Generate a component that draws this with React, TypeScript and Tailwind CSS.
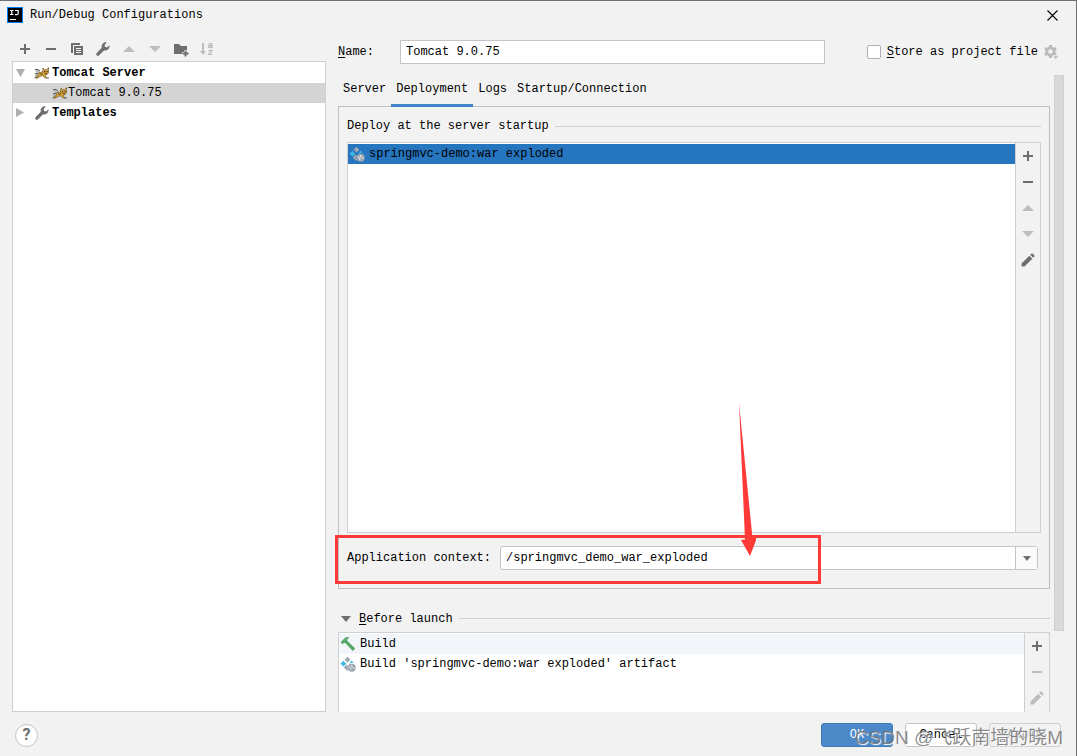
import { useState } from "react";
import type { ReactNode } from "react";

type IconProps = { className?: string };

function Svg({ className = "", children }: { className?: string; children: ReactNode }) {
  return (
    <svg viewBox="0 0 16 16" className={`h-4 w-4 shrink-0 ${className}`} fill="currentColor" aria-hidden="true">
      {children}
    </svg>
  );
}

const PlusIcon = () => (
  <Svg>
    <path d="M7 3h2v4h4v2H9v4H7V9H3V7h4z" />
  </Svg>
);

const MinusIcon = () => (
  <Svg>
    <path d="M3 7h10v2H3z" />
  </Svg>
);

const CopyIcon = () => (
  <Svg>
    <path d="M2 2h9v2H4v8H2z" />
    <path fillRule="evenodd" d="M5 5h9v9H5zM7 7v1h5V7zM7 9v1h5V9zM7 11v1h5v-1z" />
  </Svg>
);

const WrenchIcon = ({ className }: IconProps) => (
  <Svg className={className}>
    <path d="M14.4 4.2 12.1 6.4 10.1 5.9 9.6 3.9 11.8 1.6A4 4 0 0 0 6.8 6.8L1.7 11.9A1.6 1.6 0 0 0 4.1 14.3L9.2 9.2A4 4 0 0 0 14.4 4.2z" />
  </Svg>
);

const UpIcon = () => (
  <Svg>
    <path d="M2 11h12L8 5z" />
  </Svg>
);

const DownIcon = () => (
  <Svg>
    <path d="M2 5h12l-6 6z" />
  </Svg>
);

const FolderPlusIcon = () => (
  <Svg>
    <path d="M1 3h5l2 2h6v4h-3v2H9v2H1z" />
    <path d="M11.500 9.500h2v2h2v2h-2v2h-2v-2h-2v-2h2z" />
  </Svg>
);

const SortIcon = () => (
  <Svg>
    <path d="M3 2h2v8h2l-3 4-3-4h2z" />
    <path d="M9.500 2.600h2.500q1 0 1 1V6.500h-2.400q-1.200 0-1.200-1t1.200-1H13M9.300 9.600h3.700L9.700 13.400h3.600" fill="none" stroke="currentColor" strokeWidth="1.300" />
  </Svg>
);

const PencilIcon = () => (
  <Svg>
    <path d="M1.500 11.500 9.300 3.700l3 3L4.500 14.500h-3zM10.200 2.800l1-1q.8-.8 1.600 0l1.400 1.400q.8.8 0 1.600l-1 1z" />
  </Svg>
);

const GearIcon = () => (
  <Svg>
    <path d="M7.500 1v13M1.900 4.200l11.200 6.600M1.900 10.800l11.200-6.600" stroke="currentColor" strokeWidth="3" />
    <circle cx="7.500" cy="7.500" r="5" />
    <circle cx="7.500" cy="7.500" r="2.300" fill="#f2f2f2" />
    <path d="M9.500 11.800h6.500l-3.200 3.700z" stroke="#f2f2f2" strokeWidth=".8" />
  </Svg>
);

const HammerIcon = () => (
  <Svg className="text-[#59a869]">
    <path d="M.5 6.200 5.300 1.400Q7 .8 9.500 1.200L7 3.800l1 1.700 7.300 6.900-2.500 2.600-7.100-7.400-1.600-.8-1.500 1.500z" />
  </Svg>
);

const ArtifactIcon = () => (
  <Svg>
    <path d="M7.500.8 10.400 3.700 7.500 6.600 4.600 3.700zM6.800 8.600 8 10q-.7 1.300-.2 3.200L7.200 15 3.800 11.600z" fill="#9aa7b0" />
    <path d="M3.400 4.800 6.300 7.700 3.400 10.600.5 7.700zM11.600 4.600l2.300 2.300q-3.200-.3-5.100 1z" fill="#40b6e0" />
    <circle cx="11.700" cy="11.700" r="4" fill="#9aa7b0" />
    <path d="M8.800 10.700l2 1.500v1.800M12 8.900l-.8 1.700 2 .8 1.300 1.600" fill="none" stroke="#e8ecef" strokeWidth="1" />
  </Svg>
);

const TomcatIcon = () => (
  <Svg>
    <path d="M1 4.500q3-.5 5 1.800L3 8.500zM1.200 9.200 5 8.500l-1 2.700-3.200 1.600z" fill="#b9b9b4" />
    <path d="M1 4.500q3.500-.8 5 1.500M1 8.800l3.500-.6M.6 13.200l4-2.200M12 13h3" fill="none" stroke="#4f4f4f" strokeWidth=".9" />
    <path d="M5 7.500 8.500 7 9 3l1.600 1.700h2.200L14.500 2.600v5.200l-1.300 1.700-2 .5 1.300 2.700-1.300.4L8.800 10.800l-2.600.5-2.800 1.900-1.600-.2L4.300 10z" fill="#dba53a" stroke="#5c4a22" strokeWidth=".6" />
    <path d="M10 6h1.200v1.200H10zM12.500 6h1.200v1.200h-1.200z" fill="#2b2b2b" />
    <path d="M10.500 8.500h2.500M6.500 8l.8 2M8 7.700l.8 2" stroke="#4a3a18" strokeWidth=".7" />
  </Svg>
);

function AppLogo() {
  return (
    <svg viewBox="0 0 16 16" className="h-4 w-4 shrink-0" aria-hidden="true">
      <rect width="16" height="16" fill="#087cfa" />
      <rect x="1" y="1" width="14" height="14" fill="#000" />
      <path d="M3 3.500h3.500M4.750 3.500v4M3 7.500h3.500M8 3.500h3.200v3q0 1.200-1.500 1.200H8M3 12.500h6" fill="none" stroke="#fff" strokeWidth="1.200" />
    </svg>
  );
}

function ToolButton({ label, disabled, children }: { label: string; disabled?: boolean; children: ReactNode }) {
  return (
    <button
      type="button"
      aria-label={label}
      disabled={disabled}
      className="flex h-[26px] w-[26px] shrink-0 items-center justify-center text-[#6e6e6e] disabled:text-[#bdbdbd]"
    >
      {children}
    </button>
  );
}

function TreeArrow({ open }: { open?: boolean }) {
  return (
    <svg viewBox="0 0 10 10" className="h-[10px] w-[10px] shrink-0" fill="#adadad" aria-hidden="true">
      <path d={open ? "M0 1h9L4.500 9z" : "M0 0l8 4.500L0 9z"} />
    </svg>
  );
}

const tabs = ["Server", "Deployment", "Logs", "Startup/Connection"];

function Sidebar() {
  return (
    <aside className="flex w-[314px] shrink-0 flex-col">
      <div className="flex h-6 shrink-0 items-center">
        <ToolButton label="Add"><PlusIcon /></ToolButton>
        <ToolButton label="Remove"><MinusIcon /></ToolButton>
        <ToolButton label="Copy"><CopyIcon /></ToolButton>
        <ToolButton label="Edit templates"><WrenchIcon /></ToolButton>
        <ToolButton label="Move up" disabled><UpIcon /></ToolButton>
        <ToolButton label="Move down" disabled><DownIcon /></ToolButton>
        <ToolButton label="New folder"><FolderPlusIcon /></ToolButton>
        <ToolButton label="Sort" disabled><SortIcon /></ToolButton>
      </div>

      <ul className="flex-1 border border-[#cfcfcf] bg-white pt-px">
        <li>
          <button type="button" className="flex h-5 w-full items-center pl-[3px] font-bold">
            <TreeArrow open />
            <span className="ml-2 mr-0.5"><TomcatIcon /></span>
            Tomcat Server
          </button>
        </li>
        <li>
          <button type="button" className="flex h-5 w-full items-center bg-[#d4d4d4] pl-[39px]">
            <TomcatIcon />
            Tomcat 9.0.75
          </button>
        </li>
        <li>
          <button type="button" className="flex h-5 w-full items-center pl-[3px] font-bold">
            <TreeArrow />
            <span className="ml-2 mr-0.5 text-[#6e6e6e]"><WrenchIcon /></span>
            Templates
          </button>
        </li>
      </ul>
    </aside>
  );
}

function ContextRow() {
  const [context, setContext] = useState("/springmvc_demo_war_exploded");

  return (
    <div className="relative mt-[13px] flex items-center pr-[3px]">
      <label htmlFor="context" className="w-[153px] shrink-0">Application context:</label>
      <div className="flex h-6 min-w-0 flex-1 rounded-[3px] border border-[#c4c4c4] bg-white">
        <input
          id="context"
          value={context}
          onChange={(e) => setContext(e.target.value)}
          className="min-w-0 flex-1 bg-transparent px-[5px] outline-none"
        />
        <button
          type="button"
          aria-label="Show contexts"
          className="flex w-[22px] items-center justify-center border-l border-[#c4c4c4] bg-[#fafafa]"
        >
          <svg viewBox="0 0 8 5" className="h-[5px] w-2" fill="#6e6e6e" aria-hidden="true"><path d="M0 0h8L4 5z" /></svg>
        </button>
      </div>

      {/* highlight frame and arrow */}
      <div className="pointer-events-none absolute -left-3 -top-[11px] h-[49px] w-[486px] border-[3px] border-[#fd3a37]" />
      <svg
        viewBox="0 0 20 154"
        className="pointer-events-none absolute -top-[143px] left-[389px] h-[154px] w-5"
        fill="#fd3a37"
        aria-hidden="true"
      >
        <path d="M3 0 16.500 135l4.500-.5L14 153 5 137l4-.5z" />
      </svg>
    </div>
  );
}

function DeploymentPanel() {
  return (
    <section className="h-[483px] shrink-0 border border-[#bfbfbf] px-2">
      <div className="flex h-[35px] items-center gap-[6px] pt-[3px]">
        <h2>Deploy at the server startup</h2>
        <hr className="flex-1 border-[#d0d0d0]" />
      </div>

      <div className="flex h-[391px] border border-[#cfcfcf]">
        <div className="flex-1 bg-white pt-px">
          <div className="flex h-5 items-center gap-1 bg-[#2675bf] pl-px">
            <ArtifactIcon />
            springmvc-demo:war exploded
          </div>
        </div>
        <div className="flex w-[25px] flex-col items-center border-l border-[#cfcfcf]">
          <ToolButton label="Add artifact"><PlusIcon /></ToolButton>
          <ToolButton label="Remove artifact"><MinusIcon /></ToolButton>
          <ToolButton label="Move artifact up" disabled><UpIcon /></ToolButton>
          <ToolButton label="Move artifact down" disabled><DownIcon /></ToolButton>
          <ToolButton label="Edit artifact"><PencilIcon /></ToolButton>
        </div>
      </div>

      <ContextRow />
    </section>
  );
}

function BeforeLaunch() {
  return (
    <section className="flex min-h-0 flex-1 flex-col pt-[17px]">
      <div className="mb-px flex h-[25px] shrink-0 items-center gap-[6px]">
        <button type="button" className="flex items-center pl-[3px]">
          <svg viewBox="0 0 10 6" className="mr-2 h-[6px] w-[10px]" fill="#6e6e6e" aria-hidden="true"><path d="M0 0h10L5 6z" /></svg>
          <span><u className="underline-offset-2">B</u>efore launch</span>
        </button>
        <hr className="flex-1 border-[#d0d0d0]" />
      </div>

      <div className="flex min-h-0 flex-1 overflow-hidden border border-b-0 border-[#cfcfcf]">
        <ul className="flex-1 bg-white pt-px">
          <li className="flex h-5 items-center gap-1 bg-[#f2f5fa] pl-px"><HammerIcon />Build</li>
          <li className="flex h-5 items-center gap-1 pl-px"><ArtifactIcon />Build 'springmvc-demo:war exploded' artifact</li>
        </ul>
        <div className="flex w-[25px] flex-col items-center border-l border-[#cfcfcf]">
          <ToolButton label="Add task"><PlusIcon /></ToolButton>
          <ToolButton label="Remove task" disabled><MinusIcon /></ToolButton>
          <ToolButton label="Edit task" disabled><PencilIcon /></ToolButton>
        </div>
      </div>
    </section>
  );
}

export default function App() {
  const [active, setActive] = useState("Deployment");
  const [name, setName] = useState("Tomcat 9.0.75");

  return (
    <div className="relative flex h-screen flex-col overflow-hidden border-r border-t border-[#707070] bg-[#f2f2f2] font-['Liberation_Mono','Noto_Sans_CJK_SC',monospace] text-[12px] leading-4 text-black">
      {/* title bar */}
      <header className="flex h-9 shrink-0 items-start justify-between pl-[7px] pr-[18px] pt-[6px]">
        <div className="flex items-center gap-[7px]">
          <AppLogo />
          <h1>Run/Debug Configurations</h1>
        </div>
        <button type="button" aria-label="Close" className="mt-[3px]">
          <svg viewBox="0 0 11 11" className="h-[11px] w-[11px]" stroke="#000" strokeWidth="1.100" aria-hidden="true">
            <path d="M.5.5l10 10M10.500.5l-10 10" />
          </svg>
        </button>
      </header>

      <main className="flex min-h-0 flex-1 gap-3 px-3">
        <Sidebar />

        <div className="flex min-w-0 flex-1 flex-col pt-[3px]">
          <div className="flex h-6 shrink-0 items-center pr-[5px]">
            <label htmlFor="name" className="w-[62px] shrink-0"><u className="underline-offset-2">N</u>ame:</label>
            <input
              id="name"
              value={name}
              onChange={(e) => setName(e.target.value)}
              className="mr-[42px] h-6 min-w-0 flex-1 border border-[#c4c4c4] bg-white px-[5px] outline-none"
            />
            <label className="flex shrink-0 items-center gap-[6px]">
              <input type="checkbox" className="h-[14px] w-[14px] appearance-none rounded-[2px] border border-[#b0b0b0] bg-white checked:bg-[#4a88c7]" />
              <span><u className="underline-offset-2">S</u>tore as project file</span>
            </label>
            <button type="button" aria-label="Storage options" className="ml-[5px] text-[#b9b9b9]"><GearIcon /></button>
          </div>

          <div className="mt-[11px] flex min-h-0 flex-1 gap-1">
            <div className="flex min-w-0 flex-1 flex-col">
              <nav className="relative -mb-px flex h-8 shrink-0">
                {tabs.map((tab) => (
                  <button
                    key={tab}
                    type="button"
                    onClick={() => setActive(tab)}
                    className={`border-b-[3px] px-[5px] pb-[2px] ${tab === active ? "border-[#4083c9]" : "border-transparent"}`}
                  >
                    {tab}
                  </button>
                ))}
              </nav>
              <DeploymentPanel />
              <BeforeLaunch />
            </div>
            <div className="h-[556px] w-[10px] shrink-0 border border-[#d0d0d0] bg-[#d9d9d9]" />
          </div>
        </div>
      </main>

      {/* footer */}
      <footer className="flex h-11 shrink-0 items-center justify-between px-[15px] pt-0.5">
        <button
          type="button"
          aria-label="Help"
          className="flex h-[23px] w-[23px] items-center justify-center rounded-full border border-[#c4c4c4] bg-white font-['Roboto',sans-serif] text-[16px] font-bold text-[#6e6e6e]"
        >
          ?
        </button>
        <div className="flex gap-3">
          <button type="button" className="h-6 w-[72px] rounded-[3px] border border-[#4079b5] bg-[#4d89c9] text-white">OK</button>
          <button type="button" className="h-6 w-[72px] rounded-[3px] border border-[#c4c4c4] bg-white">Cancel</button>
          <button type="button" disabled className="h-6 w-[72px] rounded-[3px] border border-[#cfcfcf] text-[#a8a8a8]">Apply</button>
        </div>
      </footer>

      <p className="pointer-events-none absolute bottom-[6px] right-[13px] whitespace-nowrap font-['Liberation_Sans','Noto_Sans_CJK_SC',sans-serif] text-[19px] leading-6 text-[#666666]/75 [text-shadow:1px_1px_1px_#ffffff]">
        CSDN @飞跃南墙的晓M
      </p>
    </div>
  );
}
